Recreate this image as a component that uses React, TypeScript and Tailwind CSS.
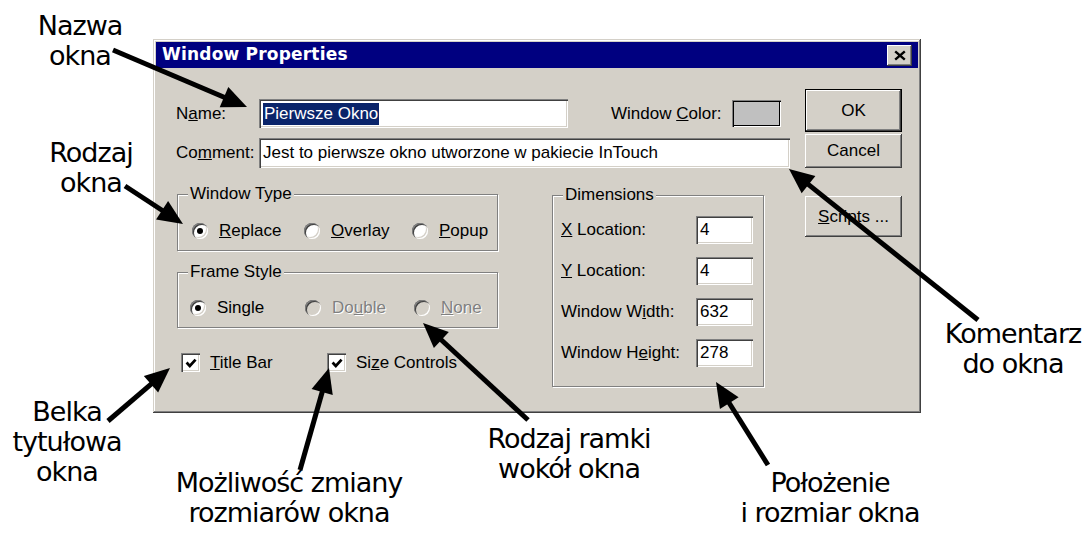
import type { ReactNode } from 'react'

// classic 3D edges
const raised =
  'shadow-[inset_-1px_-1px_#404040,inset_1px_1px_#ffffff,inset_-2px_-2px_#808080,inset_2px_2px_#d4d0c8]'
const sunken =
  'shadow-[inset_1px_1px_#808080,inset_2px_2px_#404040,inset_-1px_-1px_#ffffff,inset_-2px_-2px_#d4d0c8]'

const Field = ({ className, children }: { className: string; children?: ReactNode }) => (
  <div className={`flex items-center bg-white pl-[4px] ${sunken} ${className}`}>{children}</div>
)

const Button = ({ className, children }: { className: string; children: ReactNode }) => (
  <button type="button" className={`flex items-center justify-center bg-[#d4d0c8] ${raised} ${className}`}>
    {children}
  </button>
)

const Group = ({ title, className, children }: { title: string; className: string; children: ReactNode }) => (
  <div className={`relative border border-[#808080] shadow-[1px_1px_#ffffff,inset_1px_1px_#ffffff] ${className}`}>
    <span className="absolute left-[10px] -top-[11px] bg-[#d4d0c8] px-[2px] leading-[20px]">{title}</span>
    {children}
  </div>
)

const Radio = ({
  checked,
  disabled,
  className,
  children,
}: {
  checked?: boolean
  disabled?: boolean
  className?: string
  children: ReactNode
}) => (
  <div className={`flex items-center gap-[11px] ${className ?? ''}`}>
    <span
      className={`flex h-4 w-4 shrink-0 items-center justify-center rounded-full ${sunken} ${
        disabled ? 'bg-[#d4d0c8]' : 'bg-white'
      }`}
    >
      {checked && <span className="h-[6px] w-[6px] rounded-full bg-black" />}
    </span>
    <span className={disabled ? 'text-[#808080] [text-shadow:1px_1px_0_#ffffff]' : ''}>{children}</span>
  </div>
)

const Checkbox = ({ className, children }: { className?: string; children: ReactNode }) => (
  <div className={`flex items-center gap-[10px] ${className ?? ''}`}>
    <span className={`flex h-[19px] w-[19px] shrink-0 items-center justify-center bg-white ${sunken}`}>
      <svg viewBox="0 0 10 10" className="h-[12px] w-[12px]">
        <path d="M1.3 4.6 L4 7.4 L8.8 2.2" fill="none" stroke="black" strokeWidth="2.3" />
      </svg>
    </span>
    <span>{children}</span>
  </div>
)

const DimRow = ({ label, value }: { label: ReactNode; value: string }) => (
  <div className="flex items-center">
    <span className="w-[135px]">{label}</span>
    <Field className="h-[28px] w-[57px]">{value}</Field>
  </div>
)

const Arrow = ({ x1, y1, x2, y2 }: { x1: number; y1: number; x2: number; y2: number }) => {
  const dx = x2 - x1
  const dy = y2 - y1
  const len = Math.hypot(dx, dy)
  const ux = dx / len
  const uy = dy / len
  const hl = 25
  const hw = 11
  const bx = x2 - ux * hl
  const by = y2 - uy * hl
  const pts = `${x2},${y2} ${bx - uy * hw},${by + ux * hw} ${bx + uy * hw},${by - ux * hw}`
  return (
    <g>
      <line x1={x1} y1={y1} x2={bx + ux * 4} y2={by + uy * 4} stroke="black" strokeWidth={5} />
      <polygon points={pts} fill="black" />
    </g>
  )
}

const arrows = [
  [113, 50, 247, 107],
  [125, 186, 183, 224],
  [108, 421, 170, 368],
  [300, 470, 329, 368],
  [528, 420, 423, 323],
  [768, 465, 716, 382],
  [978, 320, 789, 169],
]

const Note = ({ className, children }: { className: string; children: ReactNode }) => (
  <div
    className={`absolute text-center font-['DejaVu_Sans',sans-serif] text-[27px] leading-[30px] tracking-[-1px] text-black ${className}`}
  >
    {children}
  </div>
)

const WindowProperties = () => (
  <div
    className={`ml-[153px] mt-[39px] h-[374px] w-[768px] bg-[#d4d0c8] p-[3px] font-['Liberation_Sans',Arial,sans-serif] text-[17px] text-black shadow-[inset_-1px_-1px_#404040,inset_1px_1px_#d4d0c8,inset_-2px_-2px_#808080,inset_2px_2px_#ffffff]`}
  >
    <div className="flex h-[26px] items-center justify-between bg-[#000080] pl-[6px] pr-[6px]">
      <span className="font-['DejaVu_Sans',sans-serif] text-[17px] font-bold tracking-[0.2px] text-white">
        Window Properties
      </span>
      <Button className="h-[21px] w-[25px]">
        <svg viewBox="0 0 10 9" className="h-[11px] w-[12px]">
          <path d="M1 1 L9 8 M9 1 L1 8" stroke="black" strokeWidth="2" />
        </svg>
      </Button>
    </div>

    <div className="flex pl-[20px]">
      <div className="w-[614px]">
        <div className="mt-[31px] flex h-[29px] items-center">
          <span className="w-[83px]">
            N<u>a</u>me:
          </span>
          <Field className="h-[29px] w-[309px] pl-[3px]">
            <span className="bg-[#0a246a] px-[1px] leading-[22px] text-white">Pierwsze Okno</span>
          </Field>
          <span className="ml-[43px]">
            Window <u>C</u>olor:
          </span>
          <span className="ml-[10px] h-[27px] w-[49px] bg-[#c0c0c0] shadow-[inset_1px_1px_#808080,inset_2px_2px_#000000,inset_-1px_-1px_#ffffff,inset_-2px_-2px_#000000]" />
        </div>

        <div className="mt-[10px] flex h-[30px] items-center">
          <span className="w-[83px]">
            Co<u>m</u>ment:
          </span>
          <Field className="h-[30px] w-[531px]">Jest to pierwsze okno utworzone w pakiecie InTouch</Field>
        </div>

        <div className="flex">
          <div className="ml-[1px] w-[321px]">
            <Group title="Window Type" className="mt-[26px] h-[57px] pl-[14px] pt-[27px]">
              <div className="flex h-[18px] items-center">
                <Radio checked className="w-[112px]">
                  <u>R</u>eplace
                </Radio>
                <Radio className="w-[108px]">
                  <u>O</u>verlay
                </Radio>
                <Radio>
                  <u>P</u>opup
                </Radio>
              </div>
            </Group>

            <Group title="Frame Style" className="mt-[21px] h-[56px] pl-[12px] pt-[26px]">
              <div className="flex h-[18px] items-center">
                <Radio checked className="w-[115px]">
                  Single
                </Radio>
                <Radio disabled className="w-[109px]">
                  Do<u>u</u>ble
                </Radio>
                <Radio disabled>
                  <u>N</u>one
                </Radio>
              </div>
            </Group>

            <div className="mt-[25px] flex h-[19px] items-center pl-[4px]">
              <Checkbox className="w-[146px]">
                <u>T</u>itle Bar
              </Checkbox>
              <Checkbox>
                Si<u>z</u>e Controls
              </Checkbox>
            </div>
          </div>

          <Group title="Dimensions" className="ml-[54px] mt-[27px] h-[192px] w-[212px] pl-[8px] pt-[20px]">
            <div className="flex flex-col gap-[13px]">
              <DimRow
                label={
                  <>
                    <u>X</u> Location:
                  </>
                }
                value="4"
              />
              <DimRow
                label={
                  <>
                    <u>Y</u> Location:
                  </>
                }
                value="4"
              />
              <DimRow
                label={
                  <>
                    Window W<u>i</u>dth:
                  </>
                }
                value="632"
              />
              <DimRow
                label={
                  <>
                    Window H<u>e</u>ight:
                  </>
                }
                value="278"
              />
            </div>
          </Group>
        </div>
      </div>

      <div className="ml-[15px] flex w-[97px] flex-col">
        <Button className="mt-[21px] h-[43px] w-[97px] border border-black">OK</Button>
        <Button className="mt-[2px] h-[34px] w-[97px]">Cancel</Button>
        <Button className="mt-[28px] h-[41px] w-[97px]">
          <span>
            <u>S</u>cripts ...
          </span>
        </Button>
      </div>
    </div>
  </div>
)

export default function App() {
  return (
    <div className="relative h-[535px] w-[1085px] overflow-hidden bg-white">
      <WindowProperties />

      <Note className="left-[20px] top-[11px] w-[120px]">
        Nazwa
        <br />
        okna
      </Note>
      <Note className="left-[31px] top-[138px] w-[120px]">
        Rodzaj
        <br />
        okna
      </Note>
      <Note className="left-[7px] top-[397px] w-[120px]">
        Belka
        <br />
        tytułowa
        <br />
        okna
      </Note>
      <Note className="left-[149px] top-[468px] w-[280px]">
        Możliwość zmiany
        <br />
        rozmiarów okna
      </Note>
      <Note className="left-[469px] top-[424px] w-[200px]">
        Rodzaj ramki
        <br />
        wokół okna
      </Note>
      <Note className="left-[720px] top-[468px] w-[220px]">
        Położenie
        <br />i rozmiar okna
      </Note>
      <Note className="left-[938px] top-[319px] w-[150px]">
        Komentarz
        <br />
        do okna
      </Note>

      <svg className="pointer-events-none absolute left-0 top-0 h-[535px] w-[1085px]">
        {arrows.map(([x1, y1, x2, y2], i) => (
          <Arrow key={i} x1={x1} y1={y1} x2={x2} y2={y2} />
        ))}
      </svg>
    </div>
  )
}
